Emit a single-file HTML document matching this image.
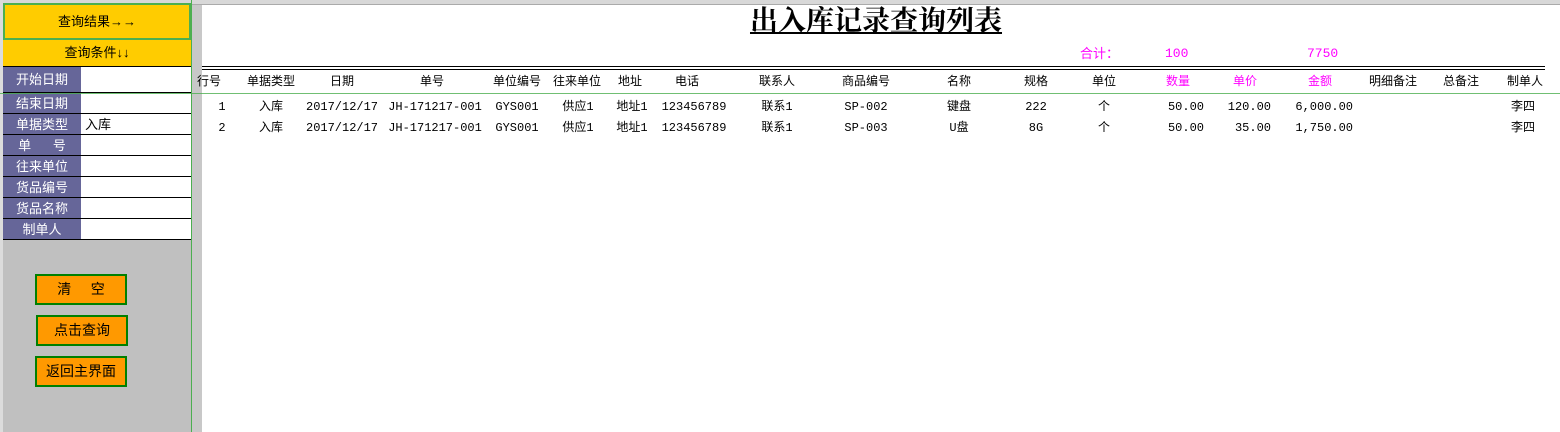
<!DOCTYPE html>
<html><head><meta charset="utf-8"><style>
body{margin:0;width:1560px;height:432px;position:relative;overflow:hidden;background:#fff;font-family:"Liberation Mono","Noto Sans CJK SC",monospace;font-size:12px;color:#000}
.a{position:absolute;white-space:nowrap;line-height:14px}
.c{transform:translateX(-50%)}
.m{color:#ff00ff}
.lbl{position:absolute;left:3px;width:78px;background:#666699;color:#fff;text-align:center;font-family:"Liberation Sans","Noto Sans CJK SC",sans-serif;font-size:13px;border-bottom:1px solid #000;box-sizing:border-box}
.val{position:absolute;left:81px;width:110px;background:#fff;border-bottom:1px solid #000;box-sizing:border-box;font-family:"Liberation Sans","Noto Sans CJK SC",sans-serif;font-size:13px;padding-left:4px}
.btn{position:absolute;width:92px;height:31px;background:#ff9900;border:2px solid #008000;box-sizing:border-box;font-family:"Liberation Sans","Noto Sans CJK SC",sans-serif;font-size:14px;text-align:center;line-height:27px}
</style></head><body>
<div style="position:absolute;left:0;top:0;width:192px;height:432px;background:#c0c0c0"></div>
<div style="position:absolute;left:192px;top:0;width:10px;height:432px;background:#c8c8c8"></div>
<div style="position:absolute;left:0;top:0;width:1560px;height:4px;background:#d8d8d8;border-bottom:1px solid #aaa"></div>
<div style="position:absolute;left:0;top:0;width:3px;height:432px;background:#dcdcdc"></div>
<div style="position:absolute;left:3px;top:3px;width:188px;height:37px;background:#ffcc00;border:2px solid #4caf50;box-sizing:border-box;text-align:center;line-height:33px;font-family:'Liberation Sans','Noto Sans CJK SC',sans-serif;font-size:13px">查询结果→→</div>
<div style="position:absolute;left:3px;top:40px;width:188px;height:27px;background:#ffcc00;border-bottom:1px solid #000;box-sizing:border-box;text-align:center;line-height:26px;font-family:'Liberation Sans','Noto Sans CJK SC',sans-serif;font-size:13px">查询条件↓↓</div>
<div class="lbl" style="top:67px;height:26px;line-height:26px">开始日期</div><div class="val" style="top:67px;height:26px"></div>
<div class="lbl" style="top:93px;height:21px;line-height:21px">结束日期</div><div class="val" style="top:93px;height:21px"></div>
<div class="lbl" style="top:114px;height:21px;line-height:21px">单据类型</div><div class="val" style="top:114px;height:21px;line-height:21px">入库</div>
<div class="lbl" style="top:135px;height:21px;line-height:21px">单&nbsp;&nbsp;&nbsp;&nbsp;&nbsp;&nbsp;号</div><div class="val" style="top:135px;height:21px"></div>
<div class="lbl" style="top:156px;height:21px;line-height:21px">往来单位</div><div class="val" style="top:156px;height:21px"></div>
<div class="lbl" style="top:177px;height:21px;line-height:21px">货品编号</div><div class="val" style="top:177px;height:21px"></div>
<div class="lbl" style="top:198px;height:21px;line-height:21px">货品名称</div><div class="val" style="top:198px;height:21px"></div>
<div class="lbl" style="top:219px;height:21px;line-height:21px">制单人</div><div class="val" style="top:219px;height:21px"></div>
<div style="position:absolute;left:191px;top:0;width:1px;height:432px;background:#4caf50"></div>
<div style="position:absolute;left:0;top:93px;width:1560px;height:1px;background:#4caf50;opacity:.8"></div>
<div class="btn" style="left:35px;top:274px">清&nbsp;&nbsp;&nbsp;&nbsp;&nbsp;空</div>
<div class="btn" style="left:36px;top:315px">点击查询</div>
<div class="btn" style="left:35px;top:356px">返回主界面</div>

<div class="a c" style="left:876px;top:5px;font-family:'Liberation Serif','Noto Serif CJK SC',serif;font-size:28px;font-weight:bold;line-height:34px;text-decoration:underline">出入库记录查询列表</div>
<div class="a m" style="left:1080px;top:47px;font-family:'Liberation Sans','Noto Sans CJK SC',sans-serif;font-size:13px">合计：</div>
<div class="a m" style="left:1165px;top:47px;font-size:13px">100</div>
<div class="a m" style="left:1307px;top:47px;font-size:13px">7750</div>
<div style="position:absolute;left:202px;top:66px;width:1343px;height:1px;background:#000"></div>
<div style="position:absolute;left:202px;top:69px;width:1343px;height:1px;background:#000"></div>

<div style="font-family:'Liberation Sans','Noto Sans CJK SC',sans-serif;font-size:12px">
<div class="a c" style="left:209px;top:74px">行号</div>
<div class="a c" style="left:271px;top:74px">单据类型</div>
<div class="a c" style="left:342px;top:74px">日期</div>
<div class="a c" style="left:432px;top:74px">单号</div>
<div class="a c" style="left:517px;top:74px">单位编号</div>
<div class="a c" style="left:577px;top:74px">往来单位</div>
<div class="a c" style="left:630px;top:74px">地址</div>
<div class="a c" style="left:687px;top:74px">电话</div>
<div class="a c" style="left:777px;top:74px">联系人</div>
<div class="a c" style="left:866px;top:74px">商品编号</div>
<div class="a c" style="left:959px;top:74px">名称</div>
<div class="a c" style="left:1036px;top:74px">规格</div>
<div class="a c" style="left:1104px;top:74px">单位</div>
<div class="a c m" style="left:1178px;top:74px">数量</div>
<div class="a c m" style="left:1245px;top:74px">单价</div>
<div class="a c m" style="left:1320px;top:74px">金额</div>
<div class="a c" style="left:1393px;top:74px">明细备注</div>
<div class="a c" style="left:1461px;top:74px">总备注</div>
<div class="a c" style="left:1525px;top:74px">制单人</div>
</div>

<div class="a c" style="left:222px;top:100px">1</div>
<div class="a c" style="left:271px;top:100px">入库</div>
<div class="a c" style="left:342px;top:100px">2017/12/17</div>
<div class="a c" style="left:435px;top:100px">JH-171217-001</div>
<div class="a c" style="left:517px;top:100px">GYS001</div>
<div class="a c" style="left:578px;top:100px">供应1</div>
<div class="a c" style="left:632px;top:100px">地址1</div>
<div class="a c" style="left:694px;top:100px">123456789</div>
<div class="a c" style="left:777px;top:100px">联系1</div>
<div class="a c" style="left:866px;top:100px">SP-002</div>
<div class="a c" style="left:959px;top:100px">键盘</div>
<div class="a c" style="left:1036px;top:100px">222</div>
<div class="a c" style="left:1104px;top:100px">个</div>
<div class="a" style="right:356px;top:100px">50.00</div>
<div class="a" style="right:289px;top:100px">120.00</div>
<div class="a" style="right:207px;top:100px">6,000.00</div>
<div class="a c" style="left:1523px;top:100px">李四</div>

<div class="a c" style="left:222px;top:121px">2</div>
<div class="a c" style="left:271px;top:121px">入库</div>
<div class="a c" style="left:342px;top:121px">2017/12/17</div>
<div class="a c" style="left:435px;top:121px">JH-171217-001</div>
<div class="a c" style="left:517px;top:121px">GYS001</div>
<div class="a c" style="left:578px;top:121px">供应1</div>
<div class="a c" style="left:632px;top:121px">地址1</div>
<div class="a c" style="left:694px;top:121px">123456789</div>
<div class="a c" style="left:777px;top:121px">联系1</div>
<div class="a c" style="left:866px;top:121px">SP-003</div>
<div class="a c" style="left:959px;top:121px">U盘</div>
<div class="a c" style="left:1036px;top:121px">8G</div>
<div class="a c" style="left:1104px;top:121px">个</div>
<div class="a" style="right:356px;top:121px">50.00</div>
<div class="a" style="right:289px;top:121px">35.00</div>
<div class="a" style="right:207px;top:121px">1,750.00</div>
<div class="a c" style="left:1523px;top:121px">李四</div>
</body></html>
